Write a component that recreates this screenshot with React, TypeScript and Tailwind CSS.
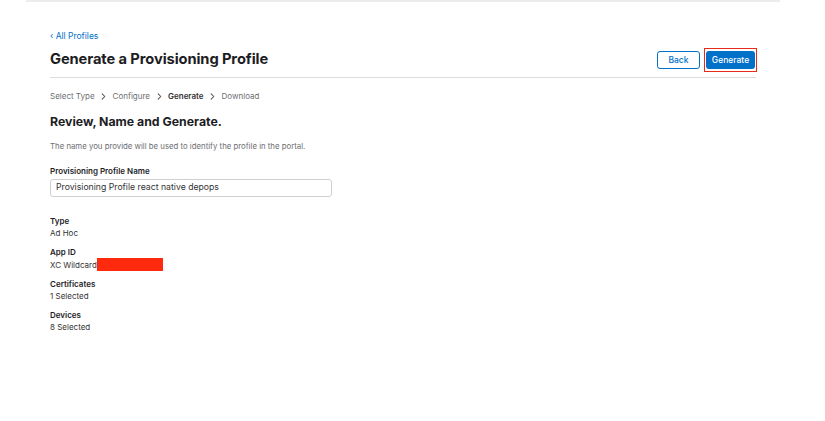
import React from 'react';

const Chevron = () => (
  <svg className="mx-[6.5px] w-[5px] h-[7px]" viewBox="0 0 5 8" fill="none">
    <path d="M1 1l3 3-3 3" stroke="#555" strokeWidth="1.2" strokeLinecap="round" strokeLinejoin="round" />
  </svg>
);

const Field = ({ label, value }: { label: string; value: React.ReactNode }) => (
  <div className="flex flex-col">
    <span className="text-[8px] font-semibold text-[#1d1d1f] leading-[12px]">{label}</span>
    <span className="text-[8px] text-[#333] leading-[12px]">{value}</span>
  </div>
);

const App = () => {
  return (
    <div className="w-[825px] h-[421px] bg-white font-['Inter',sans-serif]">
      <div className="mx-[26px] w-[754px] h-[2px] bg-[#ececec]" />
      <div className="ml-[50px] w-[706px]">
        {/* Header */}
        <div className="pt-[28px] pb-[5px] flex items-start justify-between border-b border-[#dcdcdc]">
          <div className="flex flex-col">
            <a className="text-[8.5px] text-[#0070c9] leading-[12px]">‹ All Profiles</a>
            <h1 className="mt-[7px] text-[14.7px] font-bold text-[#1d1d1f] leading-[20px] tracking-[-0.1px]">
              Generate a Provisioning Profile
            </h1>
          </div>
          <div className="mt-[18px] flex items-center gap-[4px]">
            <button className="w-[43px] h-[18px] rounded-[3px] border border-[#0070c9] text-[#0070c9] text-[8.5px] font-medium">
              Back
            </button>
            <div className="border-[1.5px] border-[#e8291c] py-[2px] px-[1px] -mr-[1px]">
              <button className="w-[49px] h-[18px] rounded-[3px] bg-[#0070c9] text-white text-[8.5px] font-medium block">
                Generate
              </button>
            </div>
          </div>
        </div>

        {/* Steps */}
        <div className="mt-[12px] flex items-center text-[8px] text-[#6e6e73] leading-[12px]">
          <span>Select Type</span>
          <Chevron />
          <span>Configure</span>
          <Chevron />
          <span className="font-semibold text-[#333]">Generate</span>
          <Chevron />
          <span>Download</span>
        </div>

        <h2 className="mt-[11px] text-[12.3px] font-bold text-[#1d1d1f] leading-[18px]">Review, Name and Generate.</h2>
        <p className="mt-[9px] text-[7.8px] text-[#6e6e73] leading-[12px]">
          The name you provide will be used to identify the profile in the portal.
        </p>

        <div className="mt-[13px] text-[8px] font-semibold text-[#1d1d1f] leading-[12px]">Provisioning Profile Name</div>
        <div className="mt-[2px] w-[282px] h-[18px] border border-[#cfcfcf] rounded-[3px] flex items-center px-[5px] text-[8.7px] text-[#333]">
          Provisioning Profile react native depops
        </div>

        <div className="mt-[18px] flex flex-col gap-[7px]">
          <Field label="Type" value="Ad Hoc" />
          <Field
            label="App ID"
            value={
              <span className="flex items-center">
                XC Wildcard
                <span className="inline-block w-[66px] h-[13px] bg-[#ff2a0d]" />
              </span>
            }
          />
          <Field label="Certificates" value="1 Selected" />
          <Field label="Devices" value="8 Selected" />
        </div>
      </div>
    </div>
  );
};

export default App;
